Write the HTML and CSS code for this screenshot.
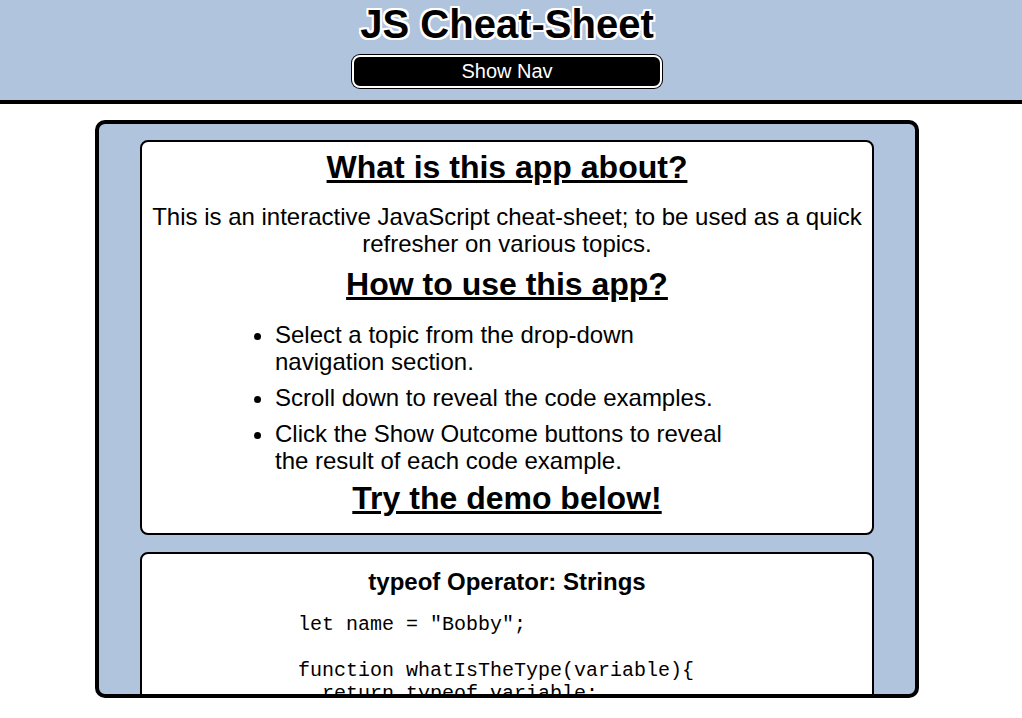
FILE: index.html
```html
<!DOCTYPE html>
<html lang="en">
<head>
<meta charset="utf-8">
<title>JS Cheat-Sheet</title>
<link rel="stylesheet" href="styles.css">
</head>
<body>
<header class="site-header">
  <div class="header-inner">
    <h1 class="site-title">JS Cheat-Sheet</h1>
    <button class="nav-btn" type="button">Show Nav</button>
  </div>
</header>
<main class="main">
  <div class="panel">
    <section class="card intro">
      <h1 class="card-title">What is this app about?</h1>
      <p class="intro-text">This is an interactive JavaScript cheat-sheet; to be used as a quick refresher on various topics.</p>
      <h1 class="card-title title-how">How to use this app?</h1>
      <ul class="steps">
        <li>Select a topic from the drop-down navigation section.</li>
        <li>Scroll down to reveal the code examples.</li>
        <li>Click the Show Outcome buttons to reveal the result of each code example.</li>
      </ul>
      <h1 class="card-title title-demo">Try the demo below!</h1>
    </section>
    <section class="card example">
      <h2 class="example-title">typeof Operator: Strings</h2>
<pre class="code">let name = "Bobby";

function whatIsTheType(variable){
  return typeof variable;
}

console.log(whatIsTheType(name));</pre>
    </section>
  </div>
</main>
</body>
</html>
```

FILE: styles.css
```css
html, body {
  margin: 0;
  padding: 0;
  background: #ffffff;
  overflow: hidden;
}

body {
  font-family: "Liberation Sans", Arial, Helvetica, sans-serif;
  color: #000000;
}

.site-header {
  background: #b0c4de;
  border-bottom: 4px solid #000000;
  height: 100px;
}

.header-inner {
  display: flex;
  flex-direction: column;
  align-items: center;
  padding-top: 1px;
  padding-right: 8px;
}

.site-title {
  margin: 0;
  font-size: 40px;
  line-height: 46px;
  font-weight: bold;
  text-shadow:
    -2px -2px 0 #fff, 2px -2px 0 #fff, -2px 2px 0 #fff, 2px 2px 0 #fff,
    0 -2px 0 #fff, 0 2px 0 #fff, -2px 0 0 #fff, 2px 0 0 #fff;
}

.nav-btn {
  margin-top: 8px;
  width: 310px;
  height: 33px;
  background: #000000;
  color: #ffffff;
  border: 2px solid #ffffff;
  border-radius: 8px;
  box-shadow: 0 0 0 1px #000000;
  font-family: "Liberation Sans", Arial, Helvetica, sans-serif;
  font-size: 20px;
  line-height: 27px;
  padding: 0;
}

.main {
  padding-top: 16px;
  padding-right: 8px;
  display: flex;
  justify-content: center;
}

.panel {
  width: 734px;
  height: 554px;
  background: #b0c4de;
  border: 4px solid #000000;
  border-radius: 10px;
  overflow: hidden;
  padding: 16px 41px 0;
  box-sizing: content-box;
  display: flex;
  flex-direction: column;
  gap: 17px;
}

.panel > .card {
  flex-shrink: 0;
}

.card {
  background: #ffffff;
  border: 2px solid #000000;
  border-radius: 8px;
}

.intro {
  padding: 7px 0 16px;
  text-align: center;
}

.card-title {
  margin: 0;
  font-size: 32px;
  line-height: 37px;
  font-weight: bold;
  text-decoration: underline;
}

.intro-text {
  margin: 17px 0 0;
  font-size: 24px;
  line-height: 27px;
}

.title-how {
  margin-top: 9px;
}

.steps {
  margin: 18px 0 0 93px;
  padding-left: 40px;
  width: 460px;
  text-align: left;
  font-size: 24px;
  line-height: 27px;
}

.steps li + li {
  margin-top: 9px;
}

.title-demo {
  margin-top: 6px;
}

.example {
  padding: 14px 0 0;
  height: 200px;
}

.example-title {
  margin: 0;
  text-align: center;
  font-size: 24px;
  line-height: 28px;
  font-weight: bold;
}

.code {
  margin: 17px 0 0 156px;
  font-family: "Liberation Mono", "Courier New", monospace;
  font-size: 20px;
  line-height: 23px;
}
```
